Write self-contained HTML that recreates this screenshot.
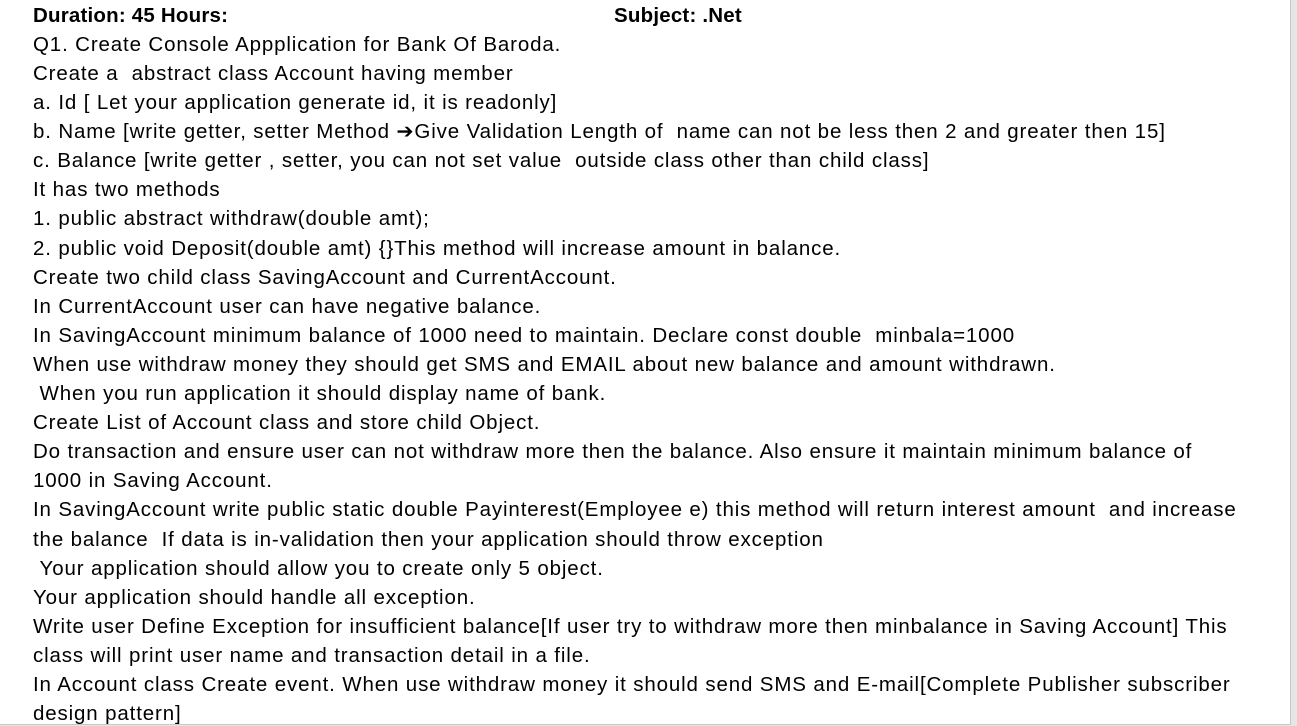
<!DOCTYPE html>
<html><head><meta charset="utf-8"><style>
html,body{margin:0;padding:0;background:#e6e6e6;width:1297px;height:726px;overflow:hidden}
.pg{position:absolute;left:0;top:0;width:1290px;height:724px;background:#fff;border-right:1px solid #c8c8c8;border-bottom:1px solid #c8c8c8}
.l{position:absolute;left:33px;font-family:"Liberation Sans",sans-serif;font-size:20.5px;letter-spacing:0.86px;color:#000;white-space:nowrap;line-height:22px}
b{font-weight:bold;letter-spacing:0.2px}
</style></head><body><div class="pg">
<div class="l" style="top:5px"><b>Duration: 45 Hours:</b></div>
<div class="l" style="top:5px;left:614px"><b>Subject: .Net</b></div>
<div class="l" style="top:34px">Q1. Create Console Appplication for Bank Of Baroda.</div>
<div class="l" style="top:63px">Create a&nbsp; abstract class Account having member</div>
<div class="l" style="top:92px">a. Id [ Let your application generate id, it is readonly]</div>
<div class="l" style="top:121px">b. Name [write getter, setter Method ➔Give Validation Length of&nbsp; name can not be less then 2 and greater then 15]</div>
<div class="l" style="top:150px">c. Balance [write getter , setter, you can not set value&nbsp; outside class other than child class]</div>
<div class="l" style="top:179px">It has two methods</div>
<div class="l" style="top:208px">1. public abstract withdraw(double amt);</div>
<div class="l" style="top:238px">2. public void Deposit(double amt) {}This method will increase amount in balance.</div>
<div class="l" style="top:267px">Create two child class SavingAccount and CurrentAccount.</div>
<div class="l" style="top:296px">In CurrentAccount user can have negative balance.</div>
<div class="l" style="top:325px">In SavingAccount minimum balance of 1000 need to maintain. Declare const double&nbsp; minbala=1000</div>
<div class="l" style="top:354px">When use withdraw money they should get SMS and EMAIL about new balance and amount withdrawn.</div>
<div class="l" style="top:383px">&nbsp;When you run application it should display name of bank.</div>
<div class="l" style="top:412px">Create List of Account class and store child Object.</div>
<div class="l" style="top:441px">Do transaction and ensure user can not withdraw more then the balance. Also ensure it maintain minimum balance of</div>
<div class="l" style="top:470px">1000 in Saving Account.</div>
<div class="l" style="top:499px">In SavingAccount write public static double Payinterest(Employee e) this method will return interest amount&nbsp; and increase</div>
<div class="l" style="top:529px">the balance&nbsp; If data is in-validation then your application should throw exception</div>
<div class="l" style="top:558px">&nbsp;Your application should allow you to create only 5 object.</div>
<div class="l" style="top:587px">Your application should handle all exception.</div>
<div class="l" style="top:616px">Write user Define Exception for insufficient balance[If user try to withdraw more then minbalance in Saving Account] This</div>
<div class="l" style="top:645px">class will print user name and transaction detail in a file.</div>
<div class="l" style="top:674px">In Account class Create event. When use withdraw money it should send SMS and E-mail[Complete Publisher subscriber</div>
<div class="l" style="top:703px">design pattern]</div>
</div></body></html>
